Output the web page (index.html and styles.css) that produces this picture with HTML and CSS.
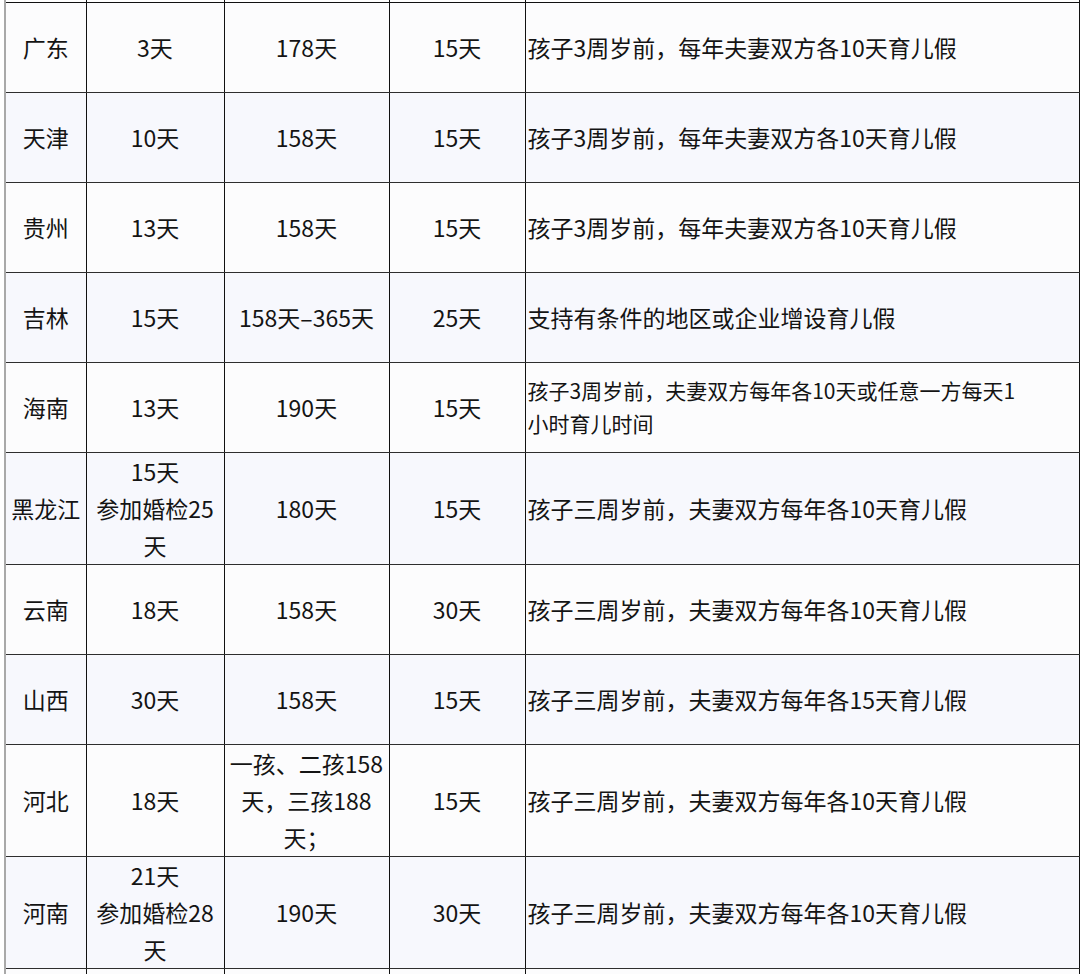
FILE: index.html
```html
<!DOCTYPE html>
<html lang="zh-CN">
<head>
<meta charset="utf-8">
<title>各地婚假产假育儿假</title>
<link rel="stylesheet" href="styles.css">
</head>
<body>
<table class="leave">
  <colgroup>
    <col class="c-prov">
    <col class="c-marry">
    <col class="c-mat">
    <col class="c-pat">
    <col class="c-note">
  </colgroup>
  <tbody>
    <tr class="cut-top"><td></td><td></td><td></td><td></td><td></td></tr>
    <tr class="odd"><td>广东</td><td>3天</td><td>178天</td><td>15天</td><td class="note">孩子3周岁前，每年夫妻双方各10天育儿假</td></tr>
    <tr class="even"><td>天津</td><td>10天</td><td>158天</td><td>15天</td><td class="note">孩子3周岁前，每年夫妻双方各10天育儿假</td></tr>
    <tr class="odd"><td>贵州</td><td>13天</td><td>158天</td><td>15天</td><td class="note">孩子3周岁前，每年夫妻双方各10天育儿假</td></tr>
    <tr class="even"><td>吉林</td><td>15天</td><td>158天–365天</td><td>25天</td><td class="note">支持有条件的地区或企业增设育儿假</td></tr>
    <tr class="odd"><td>海南</td><td>13天</td><td>190天</td><td>15天</td><td class="note small">孩子3周岁前，夫妻双方每年各10天或任意一方每天1小时育儿时间</td></tr>
    <tr class="even"><td>黑龙江</td><td>15天<br>参加婚检25天</td><td>180天</td><td>15天</td><td class="note">孩子三周岁前，夫妻双方每年各10天育儿假</td></tr>
    <tr class="odd"><td>云南</td><td>18天</td><td>158天</td><td>30天</td><td class="note">孩子三周岁前，夫妻双方每年各10天育儿假</td></tr>
    <tr class="even"><td>山西</td><td>30天</td><td>158天</td><td>15天</td><td class="note">孩子三周岁前，夫妻双方每年各15天育儿假</td></tr>
    <tr class="odd"><td>河北</td><td>18天</td><td>一孩、二孩158天，三孩188天；</td><td>15天</td><td class="note">孩子三周岁前，夫妻双方每年各10天育儿假</td></tr>
    <tr class="even"><td>河南</td><td>21天<br>参加婚检28天</td><td>190天</td><td>30天</td><td class="note">孩子三周岁前，夫妻双方每年各10天育儿假</td></tr>
    <tr class="odd cut-bottom"><td></td><td></td><td></td><td></td><td></td></tr>
  </tbody>
</table>
</body>
</html>
```

FILE: styles.css
```css
html, body {
  margin: 0;
  padding: 0;
  background: #ffffff;
  overflow: hidden;
}

body {
  font-family: "Noto Sans CJK SC", "Noto Sans", sans-serif;
  color: #141414;
}

.leave {
  margin-left: 4px;
  width: 1074px;
  border-collapse: collapse;
  table-layout: fixed;
  font-size: 23px;
  line-height: 37px;
}

.c-prov { width: 81px; }
.c-marry { width: 138px; }
.c-mat { width: 165px; }
.c-pat { width: 136px; }
.c-note { width: 554px; }

.leave td {
  padding: 0 4px;
  text-align: center;
  vertical-align: middle;
  border-right: 1px solid #111;
  border-bottom: 1px solid #2e2e2e;
}

.leave td:first-child {
  border-left: 2px solid #a9a9a9;
}

.leave tr {
  height: 90px;
}

.leave tr.cut-top {
  height: 2px;
}

.leave tr.cut-top td {
  border-bottom: 1px solid #111;
}

.leave tr.cut-bottom {
  height: 40px;
}

.odd td { background: #fcfcfd; }
.even td { background: #f7f8fd; }

.leave td.note {
  text-align: left;
  padding: 0 4px 0 2px;
}

.leave td.note.small {
  font-size: 21px;
  line-height: 33px;
  padding-right: 50px;
}
```
